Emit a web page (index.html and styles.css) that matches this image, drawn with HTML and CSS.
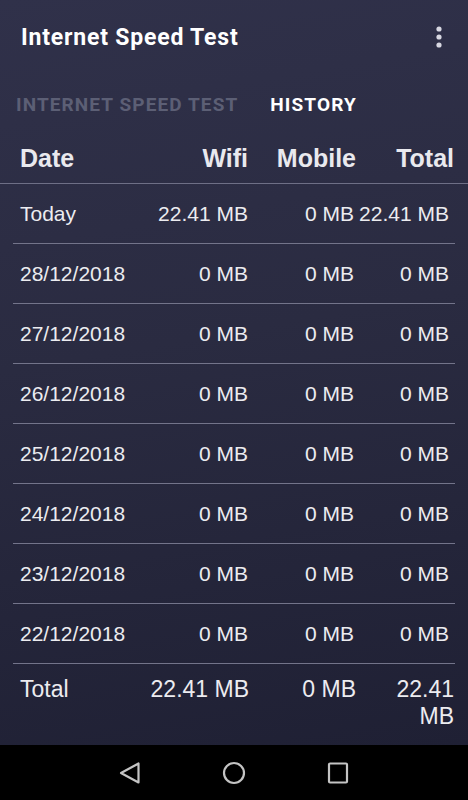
FILE: index.html
```html
<!DOCTYPE html>
<html lang="en">
<head>
<meta charset="UTF-8">
<title>Internet Speed Test - History</title>
<link rel="stylesheet" href="styles.css">
</head>
<body>

<div id="screen">
	<header class="appbar">
		<h1>Internet Speed Test</h1>
		<svg class="menu" width="6" height="22" viewBox="0 0 6 22">
			<circle cx="3" cy="3" r="2.6"/>
			<circle cx="3" cy="11" r="2.6"/>
			<circle cx="3" cy="19" r="2.6"/>
		</svg>
	</header>

	<nav class="tabs">
		<span class="tab">INTERNET SPEED TEST</span>
		<span class="tab active">HISTORY</span>
	</nav>

	<div class="head">
		<span class="date">Date</span>
		<span>Wifi</span>
		<span>Mobile</span>
		<span>Total</span>
	</div>

	<div class="list">
		<div class="row"><span class="date">Today</span><span>22.41 MB</span><span>0 MB</span><span>22.41 MB</span></div>
		<div class="row"><span class="date">28/12/2018</span><span>0 MB</span><span>0 MB</span><span>0 MB</span></div>
		<div class="row"><span class="date">27/12/2018</span><span>0 MB</span><span>0 MB</span><span>0 MB</span></div>
		<div class="row"><span class="date">26/12/2018</span><span>0 MB</span><span>0 MB</span><span>0 MB</span></div>
		<div class="row"><span class="date">25/12/2018</span><span>0 MB</span><span>0 MB</span><span>0 MB</span></div>
		<div class="row"><span class="date">24/12/2018</span><span>0 MB</span><span>0 MB</span><span>0 MB</span></div>
		<div class="row"><span class="date">23/12/2018</span><span>0 MB</span><span>0 MB</span><span>0 MB</span></div>
		<div class="row"><span class="date">22/12/2018</span><span>0 MB</span><span>0 MB</span><span>0 MB</span></div>
		<div class="total">
			<span class="date">Total</span>
			<span>22.41 MB</span>
			<span>0 MB</span>
			<span class="sum">22.41 MB</span>
		</div>
	</div>
</div>

<footer class="navbar">
	<svg width="24" height="24" viewBox="0 0 24 24">
		<path d="M20.5 2.5 L20.5 21.5 L3 12 Z"/>
	</svg>
	<svg width="24" height="24" viewBox="0 0 24 24">
		<circle cx="12" cy="12" r="10"/>
	</svg>
	<svg width="24" height="24" viewBox="0 0 24 24">
		<rect x="3" y="2.5" width="18" height="19" rx="1"/>
	</svg>
</footer>

</body>
</html>
```

FILE: styles.css
```css
html, body {
	padding: 0;
	border: 0;
	margin: 0;
	background: #000;
	color: #ececf0;
	font-family: "Liberation Sans", Arial, sans-serif;
}

#screen {
	height: 745px;
	background: linear-gradient(170deg, #30314a 0%, #2a2b41 45%, #1f2034 100%);
	overflow: hidden;
}

.appbar {
	height: 74px;
	display: flex;
	align-items: center;
	justify-content: space-between;
	padding: 0 26px 0 21px;
}
.appbar h1 {
	margin: 0;
	font-family: Roboto, sans-serif;
	font-weight: 700;
	font-size: 23px;
	color: #fff;
	letter-spacing: 0.8px;
}
.appbar .menu {
	fill: #d8d8e2;
	margin-top: -1px;
}

.tabs {
	height: 60px;
	display: flex;
	align-items: center;
	gap: 32px;
	padding-left: 16px;
}
.tab {
	font-family: Roboto, sans-serif;
	font-weight: 700;
	font-size: 19px;
	letter-spacing: 1.1px;
	color: #5c5f75;
}
.tab.active {
	color: #fff;
}

.head {
	height: 49px;
	display: grid;
	grid-template-columns: 118px 110px 108px 98px;
	align-items: center;
	padding: 0 14px 0 20px;
	border-bottom: 1px solid #6e6f86;
	font-weight: 700;
	font-size: 25px;
	color: #e9e9ee;
}
.head span, .row span, .total span {
	text-align: right;
}
.head .date, .row .date, .total .date {
	text-align: left;
}

.list {
	margin: 0 13px;
}
.row {
	height: 59px;
	display: grid;
	grid-template-columns: 120px 108px 106px 95px;
	align-items: center;
	padding: 0 7px 0 7px;
	border-bottom: 1px solid #73748a;
	font-size: 21px;
	color: #ececf0;
}

.total {
	display: grid;
	grid-template-columns: 117px 112px 107px 98px;
	align-items: start;
	padding: 12px 1px 0 7px;
	font-size: 23px;
	line-height: 27px;
	color: #ececf0;
}
.total .sum {
	padding-left: 20px;
}

.navbar {
	height: 55px;
	display: flex;
	justify-content: center;
	align-items: center;
	gap: 80px;
	background: #000;
}
.navbar svg {
	fill: none;
	stroke: #c4c4c4;
	stroke-width: 2.2;
	stroke-linejoin: round;
}
```
